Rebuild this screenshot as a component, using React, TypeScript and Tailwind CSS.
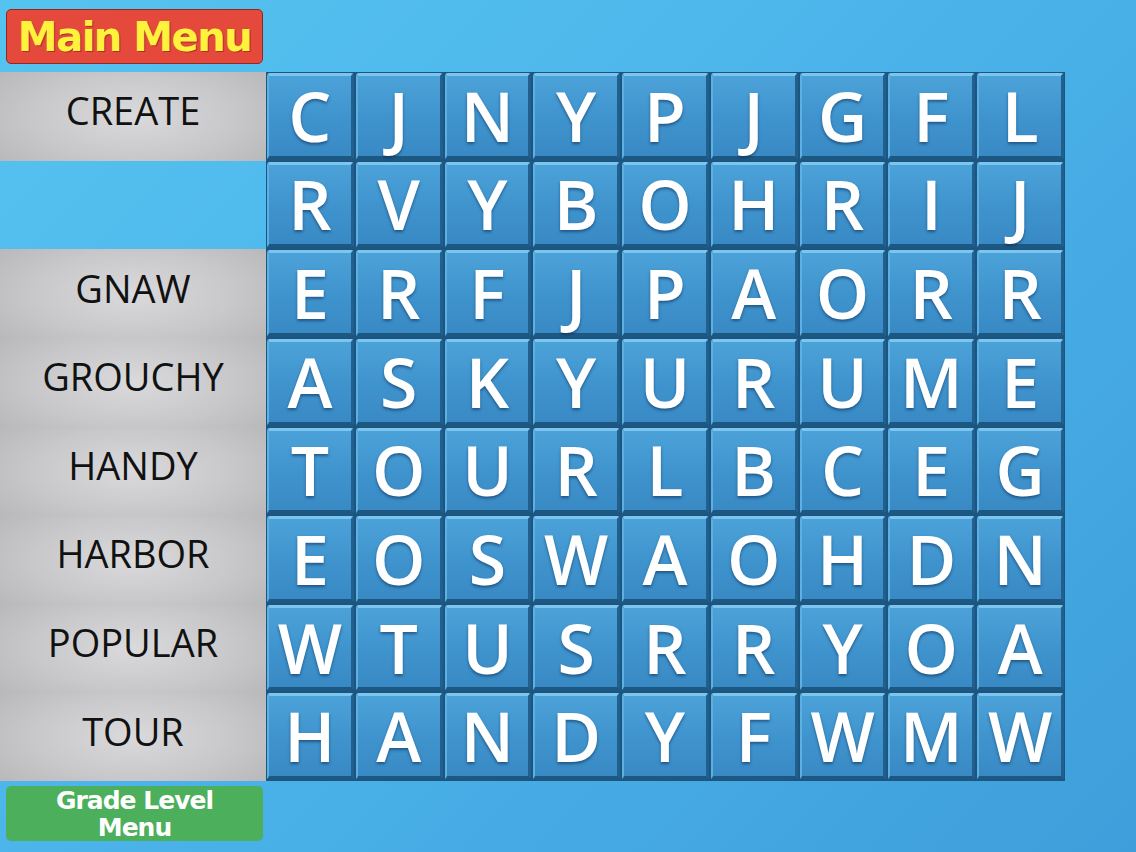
import React from "react";

const GRID = [
  "CJNYPJGFL",
  "RVYBOHRIJ",
  "ERFJPAORR",
  "ASKYURUME",
  "TOURLBCEG",
  "EOSWAOHDN",
  "WTUSRRYOA",
  "HANDYFWMW",
];

const WORDS = ["CREATE", "", "GNAW", "GROUCHY", "HANDY", "HARBOR", "POPULAR", "TOUR"];

function Tile({ ch }: { ch: string }) {
  return (
    <div className="relative flex items-center justify-center rounded-[3px] border-t-[3px] border-l-2 border-r-[3px] border-b-[4px] border-t-[#7cc5ee] border-l-[#5cb0e2] border-r-[#215f8e] border-b-[#1d5883] bg-[linear-gradient(180deg,#4ba2d8_0%,#3f93cd_55%,#398ac4_100%)]">
      <span className="font-['Open_Sans','Liberation_Sans',sans-serif] text-[68px] font-semibold leading-none text-white [text-shadow:0_2px_3px_rgba(10,40,80,0.55)]">
        {ch}
      </span>
    </div>
  );
}

export default function App() {
  return (
    <div className="flex h-[852px] w-[1136px] overflow-hidden bg-[linear-gradient(135deg,#55c3f0_0%,#4cb4ea_45%,#3e9edb_100%)]">
      <div className="flex w-[266px] flex-col">
        <div className="flex h-[72px] items-start pl-[6px] pt-[9px]">
          <div className="flex h-[55px] w-[257px] items-center justify-center rounded-[5px] border border-[#8a2a20] bg-[#e5493b]">
            <span className="font-['DejaVu_Sans',sans-serif] text-[40px] font-bold leading-none tracking-[-1.5px] text-[#fff23c] [text-shadow:1px_1px_0_#a8302a]">
              Main Menu
            </span>
          </div>
        </div>
        <div className="grid h-[709px] grid-rows-8">
          {WORDS.map((w, i) =>
            w ? (
              <div
                key={i}
                className="flex items-center justify-center bg-[radial-gradient(ellipse_75%_95%_at_center,#dadadc_0%,#c8c8ca_50%,#b2b2b4_100%)] pb-[12px]"
              >
                <span className="font-['Open_Sans','Liberation_Sans',sans-serif] text-[38px] leading-none text-[#111]">
                  {w}
                </span>
              </div>
            ) : (
              <div key={i} />
            )
          )}
        </div>
        <div className="pl-[6px] pt-[5px]">
          <div className="flex h-[55px] w-[257px] flex-col items-center justify-center rounded-[5px] bg-[#4caf5b]">
            <span className="font-['DejaVu_Sans',sans-serif] text-[25px] font-bold leading-[27px] tracking-[-1px] text-white">
              Grade Level
            </span>
            <span className="font-['DejaVu_Sans',sans-serif] text-[25px] font-bold leading-[27px] tracking-[-1px] text-white">
              Menu
            </span>
          </div>
        </div>
      </div>
      <div className="pt-[72px]">
        <div className="grid h-[709px] w-[799px] grid-cols-9 grid-rows-8 gap-[2px] bg-[#1c5580] p-px">
          {GRID.flatMap((row, r) =>
            row.split("").map((ch, c) => <Tile key={`${r}-${c}`} ch={ch} />)
          )}
        </div>
      </div>
    </div>
  );
}
